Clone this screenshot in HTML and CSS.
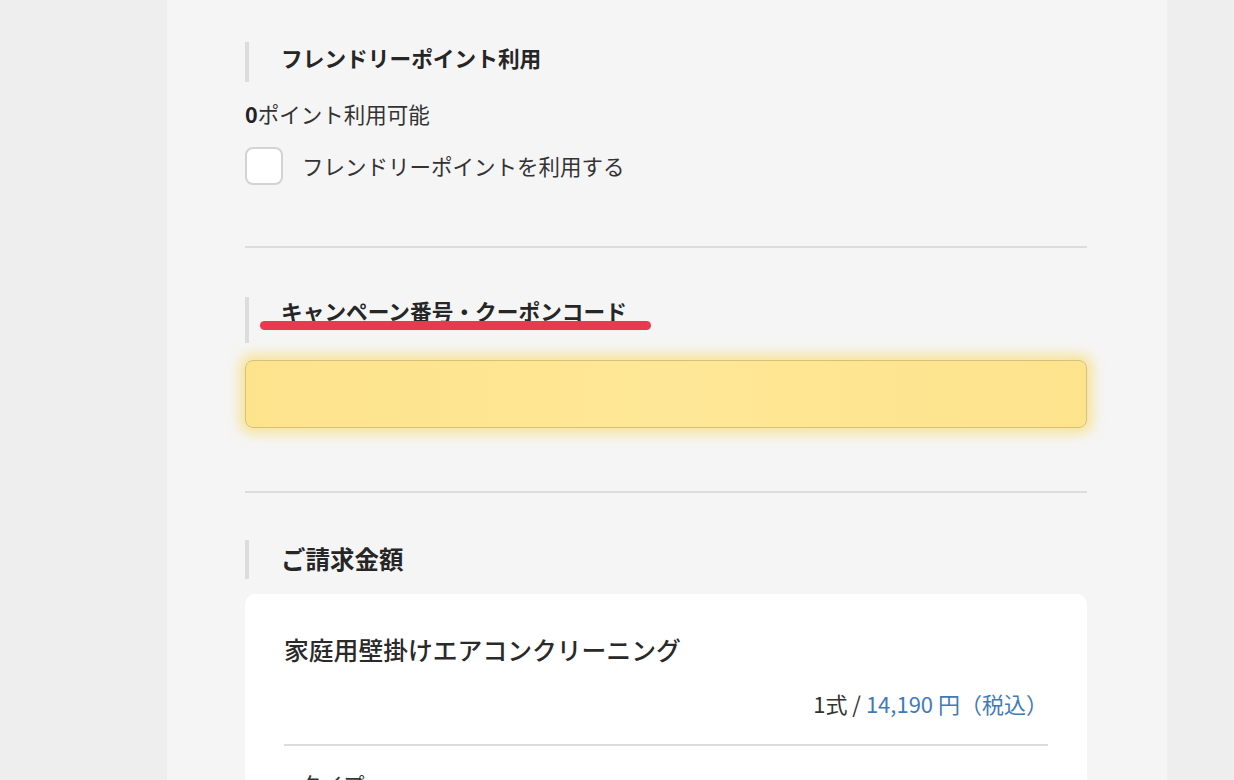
FILE: index.html
```html
<!DOCTYPE html>
<html lang="ja">
<head>
    <meta charset="UTF-8">
    <title>ご注文内容の確認</title>
    <link rel="stylesheet" href="styles.css">
</head>
<body>
<div id="page">
    <!-- フレンドリーポイント -->
    <h2 class="sec-title">フレンドリーポイント利用</h2>
    <p class="point-text"><b>0</b>ポイント利用可能</p>
    <label class="check-row">
        <span class="check-box"></span>
        <span class="check-label">フレンドリーポイントを利用する</span>
    </label>

    <div class="line"></div>

    <!-- クーポン -->
    <h2 class="sec-title sec-title-coupon">キャンペーン番号・クーポンコード<span class="marker"></span></h2>
    <input class="coupon-input" type="text" value="">

    <div class="line line-coupon"></div>

    <!-- 請求 -->
    <h2 class="sec-title sec-title-bill">ご請求金額</h2>
    <div class="bill-card">
        <p class="bill-name">家庭用壁掛けエアコンクリーニング</p>
        <p class="bill-price">1式 / <span class="price">14,190 円（税込）</span></p>
        <div class="bill-line"></div>
        <p class="bill-type">タイプ</p>
    </div>
</div>
</body>
</html>
```

FILE: styles.css
```css
* {
    margin: 0;
    padding: 0;
    box-sizing: border-box;
}

body {
    background-color: #eeeeee;
    font-family: "Noto Sans CJK JP", "Noto Sans", sans-serif;
    color: #333;
    overflow: hidden;
}

#page {
    width: 1000px;
    min-height: 780px;
    margin-left: 167px;
    padding: 42px 80px 0 78px;
    background-color: #f5f5f5;
}

.sec-title {
    position: relative;
    border-left: 4px solid #dcdcdc;
    padding: 0 0 8px 32px;
    font-size: 21.7px;
    line-height: 32px;
    font-weight: bold;
    color: #262626;
}

.point-text {
    margin-top: 16px;
    font-size: 21.5px;
    line-height: 32px;
}

.point-text b {
    color: #222;
}

.check-row {
    display: flex;
    align-items: center;
    gap: 19px;
    margin-top: 17px;
}

.check-box {
    width: 38px;
    height: 38px;
    border: 2px solid #d3d3d3;
    border-radius: 8px;
    background-color: #fff;
}

.check-label {
    font-size: 21.5px;
    line-height: 32px;
}

.line {
    height: 2px;
    margin-top: 61px;
    background-color: #dcdcdc;
}

.sec-title-coupon {
    margin-top: 49px;
    line-height: 28px;
    padding-bottom: 18px;
}

.marker {
    position: absolute;
    left: 11px;
    top: 24px;
    width: 391px;
    height: 9px;
    border-radius: 5px;
    background-color: #ea3850;
}

.coupon-input {
    display: block;
    width: 100%;
    height: 68px;
    margin-top: 17px;
    border: 1px solid #d6c07a;
    border-radius: 8px;
    background: linear-gradient(90deg, #fde38c, #fee796 50%, #fde38c);
    box-shadow: 0 0 12px 6px rgba(250, 215, 85, 0.55);
    outline: none;
}

.line-coupon {
    margin-top: 63px;
}

.sec-title-bill {
    margin-top: 47px;
    padding: 3px 0 4px 32px;
    font-size: 24.5px;
}

.bill-card {
    margin-top: 15px;
    padding: 39px 39px 0;
    height: 300px;
    border-radius: 10px;
    background-color: #fff;
}

.bill-name {
    font-size: 24.8px;
    line-height: 32px;
    font-weight: 500;
    color: #2a2a2a;
}

.bill-price {
    margin-top: 22px;
    text-align: right;
    font-size: 22px;
    line-height: 32px;
    color: #333;
}

.price {
    color: #3f7bb9;
}

.bill-line {
    height: 2px;
    margin-top: 25px;
    background-color: #dcdcdc;
}

.bill-type {
    margin-top: 22px;
    padding-left: 16px;
    font-size: 21.5px;
    line-height: 32px;
}
```
